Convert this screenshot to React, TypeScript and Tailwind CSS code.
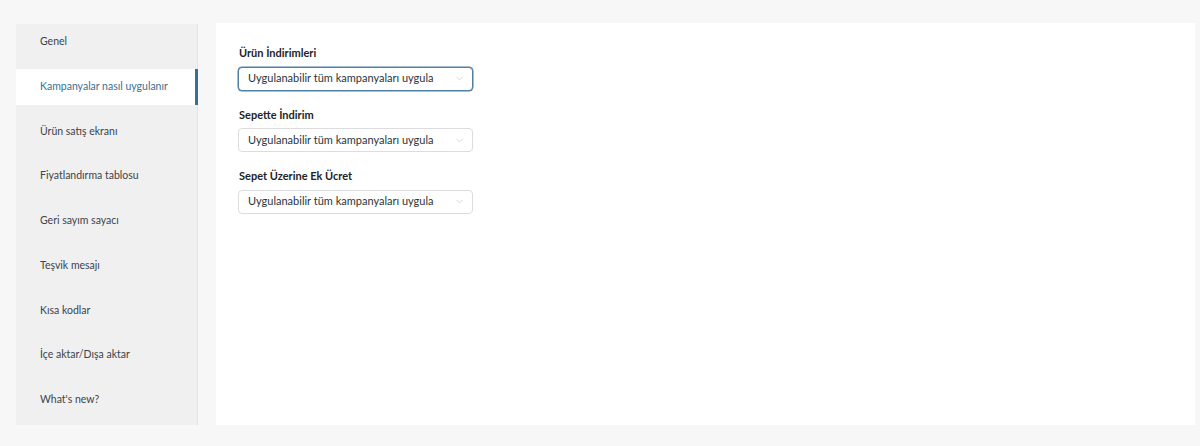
import { ChevronDown } from 'lucide-react';

const NAV = [
  'Genel',
  'Kampanyalar nasıl uygulanır',
  'Ürün satış ekranı',
  'Fiyatlandırma tablosu',
  'Geri sayım sayacı',
  'Teşvik mesajı',
  'Kısa kodlar',
  'İçe aktar/Dışa aktar',
  "What's new?",
];

const FIELDS = [
  { label: 'Ürün İndirimleri', focused: true },
  { label: 'Sepette İndirim', focused: false },
  { label: 'Sepet Üzerine Ek Ücret', focused: false },
];

function Select({ focused }: { focused: boolean }) {
  return (
    <div
      className={`flex h-[24px] w-[235px] items-center justify-between rounded-[4px] border bg-white pl-[9px] pr-[7px] text-[11px] text-[#2c3338] ${
        focused ? 'border-[#4f7fa3] shadow-[0_0_0_0.5px_#4f7fa3]' : 'border-[#dcdcde]'
      }`}
    >
      <span>Uygulanabilir tüm kampanyaları uygula</span>
      <ChevronDown className="h-[11px] w-[11px] text-[#c3c4c7]" strokeWidth={1.5} />
    </div>
  );
}

export default function App() {
  return (
    <div
      className="flex min-h-[446px] w-[1200px] gap-[18px] bg-[#f7f7f7] pb-[21px] pl-[16px] pr-[5px] pt-[23px]"
      style={{ fontFamily: 'Lato, "Noto Sans", sans-serif' }}
    >
      <aside className="mt-[1px] flex w-[182px] shrink-0 flex-col gap-[8.75px] border-r border-[#e3e3e5] bg-[#f0f0f1] pb-[7px]">
        {NAV.map((item, i) => (
          <div
            key={item}
            className={`flex h-[36px] items-center pl-[24px] text-[10.5px] ${
              i === 1
                ? '-mr-px border-r-[3px] border-[#3b6f92] bg-white text-[#3b6f92]'
                : 'text-[#3c434a]'
            }`}
          >
            {item}
          </div>
        ))}
      </aside>

      <main className="flex-1 bg-white px-[22px] pt-[22px]">
        <div className="flex flex-col gap-[16px]">
          {FIELDS.map((f) => (
            <div key={f.label} className="flex flex-col gap-[5px]">
              <label className="pl-[1px] text-[11px] font-bold text-[#1d2327]">{f.label}</label>
              <Select focused={f.focused} />
            </div>
          ))}
        </div>
      </main>
    </div>
  );
}
